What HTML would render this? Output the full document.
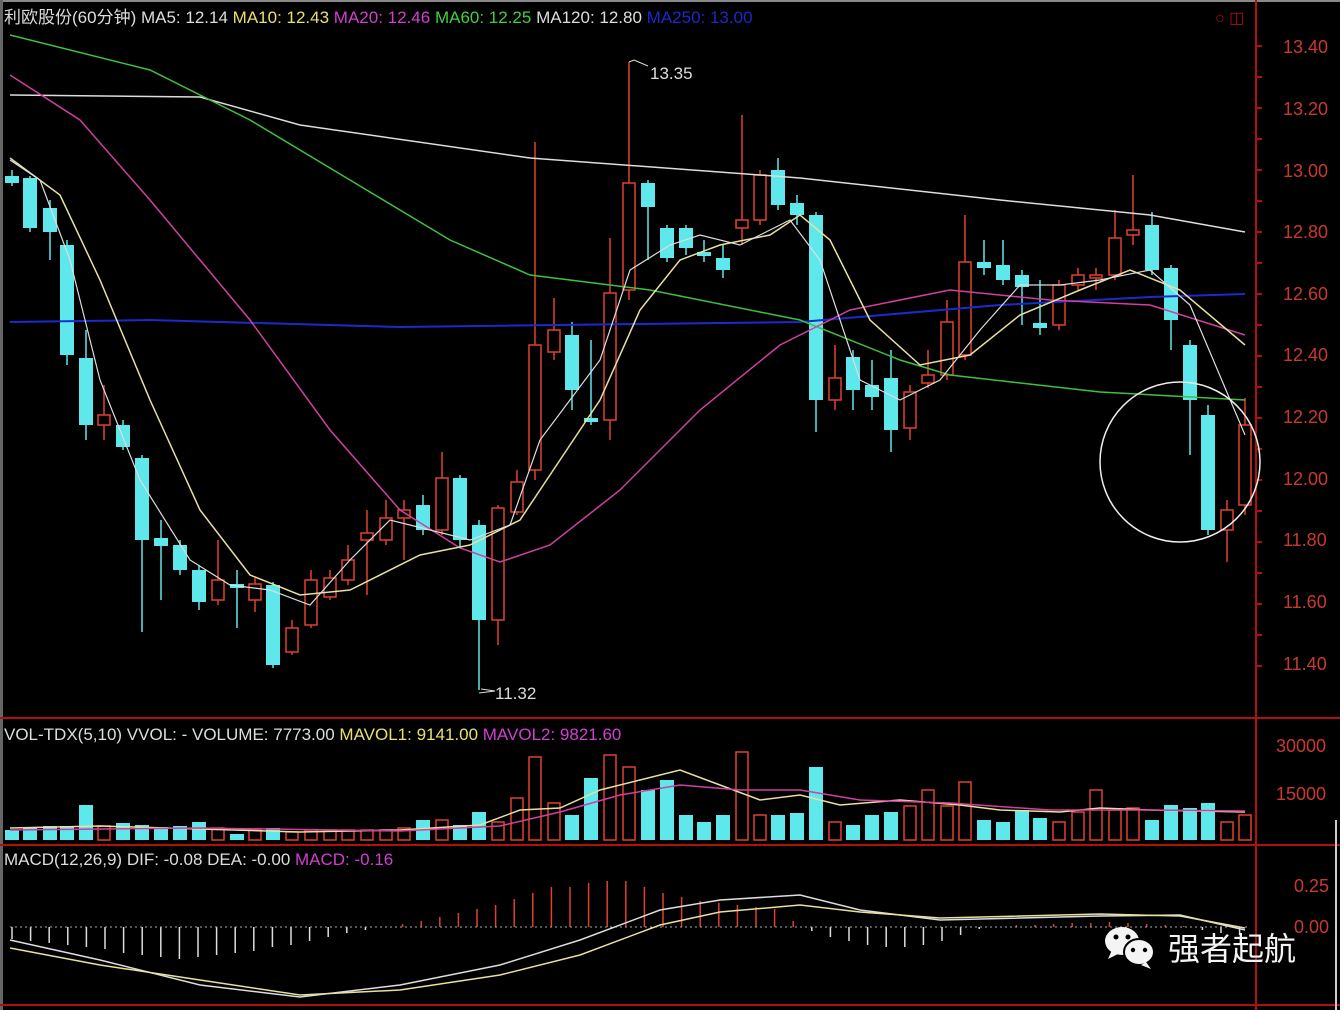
<!DOCTYPE html>
<html><head><meta charset="utf-8">
<style>
html,body{margin:0;padding:0;background:#000;}
svg{display:block;}
text{font-family:"Liberation Sans","Noto Sans CJK SC",sans-serif;}
</style></head>
<body>
<svg id="s" width="1340" height="1010" viewBox="0 0 1340 1010" xmlns="http://www.w3.org/2000/svg">
<rect width="1340" height="1010" fill="#000"/>
<rect x="0" y="0" width="1340" height="2" fill="#888"/>
<rect x="0" y="0" width="3" height="1010" fill="#666"/>
<line x1="1256" y1="0" x2="1256" y2="1010" stroke="#b01010" stroke-width="2"/>
<line x1="0" y1="718" x2="1340" y2="718" stroke="#b01010" stroke-width="2"/>
<line x1="0" y1="845" x2="1340" y2="845" stroke="#b01010" stroke-width="2"/>
<line x1="0" y1="1005" x2="1340" y2="1005" stroke="#b01010" stroke-width="2"/>
<line x1="1336" y1="820" x2="1336" y2="1010" stroke="#ccc" stroke-width="2"/>
<g fill="#c83a30" font-size="18">
<text x="1283" y="53">13.40</text><text x="1283" y="115">13.20</text><text x="1283" y="177">13.00</text>
<text x="1283" y="238">12.80</text><text x="1283" y="300">12.60</text><text x="1283" y="361">12.40</text>
<text x="1283" y="423">12.20</text><text x="1283" y="485">12.00</text><text x="1283" y="546">11.80</text>
<text x="1283" y="608">11.60</text><text x="1283" y="670">11.40</text>
<text x="1276" y="752">30000</text><text x="1276" y="800">15000</text>
<text x="1294" y="892">0.25</text><text x="1294" y="933">0.00</text>
</g>
<g stroke="#b01010" stroke-width="2" id="ticks"></g>
<text x="4" y="23" font-size="17" fill="#ddd">利欧股份(60分钟) <tspan>MA5: 12.14</tspan> <tspan fill="#e8e06a">MA10: 12.43</tspan> <tspan fill="#d040d0">MA20: 12.46</tspan> <tspan fill="#40d040">MA60: 12.25</tspan> <tspan fill="#ddd">MA120: 12.80</tspan> <tspan fill="#1a2acc">MA250: 13.00</tspan></text>
<text x="1215" y="23" font-size="16" fill="#b01010">○ ◫</text>
<text x="4" y="740" font-size="17" fill="#ddd">VOL-TDX(5,10) VVOL: -  VOLUME: 7773.00 <tspan fill="#e8e06a">MAVOL1: 9141.00</tspan> <tspan fill="#d040d0">MAVOL2: 9821.60</tspan></text>
<text x="4" y="865" font-size="17" fill="#ddd">MACD(12,26,9) DIF: -0.08 DEA: -0.00 <tspan fill="#d040d0">MACD: -0.16</tspan></text>
<g id="c"></g>
<polyline fill="none" stroke="#ddd" stroke-width="1.5" points="10,95 200,97 300,125 530,158 800,178 1000,200 1150,215 1245,232"/>
<polyline fill="none" stroke="#1a2acc" stroke-width="2" points="10,322 150,320 400,327 800,322 1000,305 1150,297 1245,294"/>
<polyline fill="none" stroke="#40c040" stroke-width="1.5" points="10,35 150,70 250,120 350,180 450,240 530,275 650,290 800,320 900,360 950,375 1100,392 1245,400"/>
<polyline fill="none" stroke="#d040a0" stroke-width="1.5" points="10,75 80,120 150,200 250,320 330,430 400,510 460,548 500,562 550,545 620,490 700,410 780,345 850,310 950,290 1050,300 1150,305 1245,335"/>
<polyline fill="none" stroke="#e8e0a0" stroke-width="1.5" points="10,158 60,195 100,280 150,400 200,510 250,575 300,595 350,590 420,555 470,545 520,520 560,460 600,400 640,310 680,260 720,245 770,235 800,215 830,240 870,320 920,365 970,355 1020,315 1080,290 1130,270 1180,290 1245,345"/>
<polyline fill="none" stroke="#ddd" stroke-width="1.2" points="10,160 40,180 70,260 100,380 140,480 190,560 230,585 270,590 310,605 350,560 390,520 430,530 470,540 510,525 540,440 570,400 600,360 630,270 670,245 700,235 740,245 790,220 820,260 860,380 900,400 940,380 980,330 1020,285 1060,285 1100,280 1150,270 1190,305 1245,435"/>
<circle cx="1180" cy="462" r="80" fill="none" stroke="#eee" stroke-width="1.5"/>
<text x="650" y="79" font-size="17" fill="#ddd">13.35</text>
<polyline points="629,62 634,60 648,66" fill="none" stroke="#ddd"/>
<text x="495" y="699" font-size="17" fill="#ddd">11.32</text>
<polyline points="479,693 495,691 481,689" fill="none" stroke="#ddd"/>
<polyline fill="none" stroke="#e8e0a0" stroke-width="1.5" points="10,828 100,826 200,829 300,832 400,830 480,825 520,810 560,808 600,790 640,780 680,770 720,785 760,800 800,795 840,805 900,800 960,805 1000,810 1060,812 1100,808 1150,810 1245,812"/>
<polyline fill="none" stroke="#d040a0" stroke-width="1.5" points="10,830 200,828 400,831 500,826 560,812 620,795 680,785 740,790 800,790 860,800 950,803 1050,810 1150,810 1245,811"/>
<line x1="10" y1="927" x2="1250" y2="927" stroke="#aaa" stroke-dasharray="2,3"/>
<polyline fill="none" stroke="#ddd" stroke-width="1.5" points="10,940 100,960 200,985 300,997 400,985 500,965 580,940 660,910 720,900 800,895 860,910 940,920 1100,916 1180,915 1245,930"/>
<polyline fill="none" stroke="#e8e0a0" stroke-width="1.5" points="10,948 100,965 200,980 300,995 400,990 500,975 580,955 660,925 720,912 800,905 860,912 940,918 1100,914 1180,916 1245,928"/>
<g fill="#f4f4f4">
<ellipse cx="1122" cy="941" rx="17" ry="14"/>
<path d="M1112,950 l-4,9 l10,-5z"/>
<ellipse cx="1139" cy="952" rx="15" ry="13" stroke="#000" stroke-width="2"/>
<path d="M1146,962 l5,7 l-10,-4z"/>
<circle cx="1116" cy="937" r="2.5" fill="#000"/><circle cx="1128" cy="937" r="2.5" fill="#000"/>
<circle cx="1133" cy="950" r="2.2" fill="#000"/><circle cx="1145" cy="950" r="2.2" fill="#000"/>
<text x="1168" y="960" font-size="32" font-family="'Noto Sans CJK SC',sans-serif">强者起航</text>
</g>
</svg>
<script>
var C=[[12,176,183,170,186],[30,178,228,176,232],[50,208,232,200,260],[67,245,355,240,365],[86,358,425,330,440],[104,425,415,385,440,1],[123,425,447,420,450],[142,458,540,455,632],[161,538,546,520,600],[180,545,570,540,575],[199,570,602,565,610],[218,600,580,540,605,1],[237,584,588,570,628],[255,600,584,578,612,1],[273,585,665,582,668],[292,652,628,620,655,1],[311,625,580,570,628,1],[330,597,578,570,600,1],[348,580,560,545,585,1],[367,540,533,510,595,1],[386,540,518,500,545,1],[404,518,510,500,560,1],[423,505,530,495,535],[442,530,478,452,535,1],[460,478,540,475,548],[479,525,620,520,690],[498,620,508,505,645,1],[517,512,482,470,515,1],[535,470,345,142,480,1],[554,352,330,298,360,1],[572,335,390,322,410],[591,418,422,340,425],[610,420,293,238,440,1],[629,290,183,62,300,1],[648,183,207,180,260],[667,228,258,225,262],[686,228,248,225,255],[704,252,256,240,262],[723,258,270,245,278],[742,228,220,115,245,1],[760,220,175,170,225,1],[778,170,205,158,210],[797,203,215,195,225],[816,215,400,212,432],[835,400,378,345,410,1],[853,357,390,350,410],[872,385,397,360,410],[891,378,430,350,452],[910,428,392,385,440,1],[928,383,375,350,388,1],[947,375,322,300,380,1],[965,355,262,215,360,1],[984,262,268,240,275],[1003,265,280,240,285],[1022,275,287,270,325],[1040,323,328,280,335],[1059,325,285,280,330,1],[1078,285,275,268,290,1],[1096,278,275,268,290,1],[1115,275,238,210,280,1],[1133,235,230,175,245,1],[1152,225,270,212,275],[1171,268,320,265,350],[1190,345,400,340,455],[1208,415,530,405,535],[1227,530,510,500,562,1],[1245,505,425,398,515,1]];
var VT=[830,828,826,826,805,826,823,825,827,826,822,828,834,830,828,832,830,830,830,830,830,828,820,820,825,812,822,798,757,803,815,778,755,767,790,780,815,822,815,752,815,815,813,767,822,825,815,812,806,790,806,782,820,822,810,818,822,812,790,810,808,820,805,808,803,822,815];
var M=[-12,-14,-16,-18,-20,-22,-26,-28,-30,-32,-30,-28,-26,-24,-20,-18,-14,-10,-6,-3,0,3,6,10,14,18,22,28,34,40,40,44,46,46,40,34,30,26,24,22,20,18,6,-4,-10,-14,-18,-20,-20,-18,-14,-8,-2,0,2,2,3,4,4,5,4,3,2,1,-3,-6,-8];
var s='';
for(var i=0;i<C.length;i++){var c=C[i],x=c[0],up=c[5],t=Math.min(c[1],c[2]),b=Math.max(c[1],c[2]),h=Math.max(b-t,2);
var col=up?'#e04030':'#5ee8ec';
s+='<line x1="'+x+'" y1="'+c[3]+'" x2="'+x+'" y2="'+c[4]+'" stroke="'+col+'" stroke-width="1.5"/>';
if(up)s+='<rect x="'+(x-6)+'" y="'+t+'" width="12" height="'+h+'" fill="#000" stroke="'+col+'" stroke-width="1.5"/>';
else s+='<rect x="'+(x-7)+'" y="'+t+'" width="14" height="'+h+'" fill="'+col+'"/>';
var vt=VT[i],vh=840-vt;
if(up)s+='<rect x="'+(x-6)+'" y="'+vt+'" width="12" height="'+vh+'" fill="none" stroke="#e04030" stroke-width="1.5"/>';
else s+='<rect x="'+(x-7)+'" y="'+vt+'" width="14" height="'+vh+'" fill="#5ee8ec"/>';
}
for(var j=0;j<M.length;j++){var x=12+j*18.6,m=M[j];var col=m>=0?'#e04030':'#ddd';
s+='<line x1="'+x+'" y1="927" x2="'+x+'" y2="'+(927-m)+'" stroke="'+col+'" stroke-width="1.5"/>';}
document.getElementById('c').innerHTML=s;
var t='';for(var y=46;y<=670;y+=31)t+='<line x1="1256" y1="'+y+'" x2="1262" y2="'+y+'"/>';
document.getElementById('ticks').innerHTML=t;
</script>
</body></html>
